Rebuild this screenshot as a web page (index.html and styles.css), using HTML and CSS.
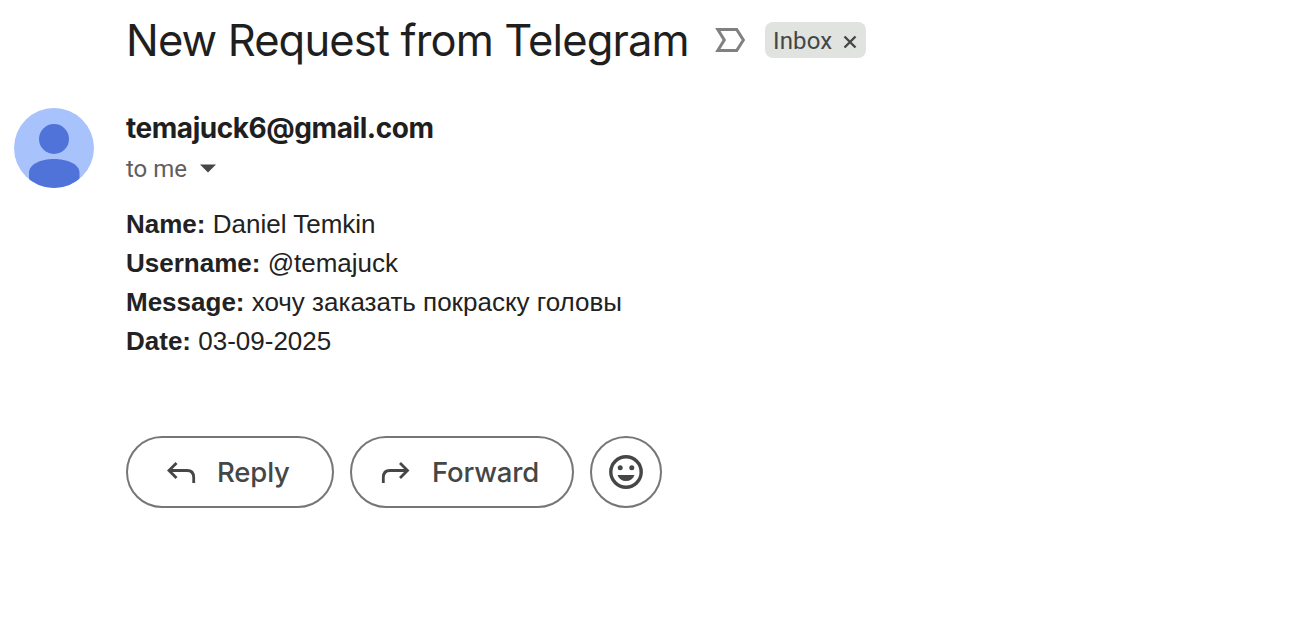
FILE: index.html
```html
<!DOCTYPE html>
<html lang="en">
<head>
<meta charset="utf-8">
<title>New Request from Telegram</title>
<link rel="stylesheet" href="styles.css">
</head>
<body>
<main class="mail">
  <header class="subject">
    <h1 class="subject-title">New Request from Telegram</h1>
    <svg class="importance" width="30" height="24" viewBox="0 0 30 24"><path d="M2.8 1.5H21.7L28.4 12L21.7 22.5H2.8L9.3 12Z" fill="none" stroke="#808080" stroke-width="3"/></svg>
    <span class="label"><span>Inbox</span><svg class="label-close" width="14" height="14" viewBox="0 0 14 14"><path d="M1.500 1.500L12.500 12.500M12.500 1.500L1.500 12.500" stroke="#444746" stroke-width="2.400"/></svg></span>
  </header>
  <section class="message">
    <svg class="avatar" width="80" height="80" viewBox="0 0 80 80">
      <defs><clipPath id="round"><circle cx="40" cy="40" r="40"/></clipPath></defs>
      <g clip-path="url(#round)">
        <rect width="80" height="80" fill="#a8c2fb"/>
        <circle cx="40" cy="31" r="15" fill="#4f73d9"/>
        <path d="M15 80V65C15 56 27 51 40 51S65.500 56 65.500 65V80Z" fill="#4f73d9"/>
      </g>
    </svg>
    <div class="content">
      <div class="sender">temajuck6@gmail.com</div>
      <div class="recipient"><span>to me</span><svg width="16" height="9" viewBox="0 0 16 9"><path d="M0 .5H16L8 8.500Z" fill="#444746"/></svg></div>
      <div class="body">
        <p><b>Name:</b> Daniel Temkin</p>
        <p><b>Username:</b> @temajuck</p>
        <p><b>Message:</b> хочу заказать покраску головы</p>
        <p><b>Date:</b> 03-09-2025</p>
      </div>
      <div class="actions">
        <button class="btn reply"><svg width="30" height="24" viewBox="0 0 30 24"><path d="M10.500 3L3 10.500L10.500 18M3.500 10.500H21Q27.700 10.500 27.700 17.500V23" fill="none" stroke="#444746" stroke-width="2.800"/></svg><span>Reply</span></button>
        <button class="btn forward"><svg width="30" height="24" viewBox="0 0 30 24"><path d="M20 3L27.500 10.500L20 18M27 10.500H10Q3.300 10.500 3.300 17.500V23" fill="none" stroke="#444746" stroke-width="2.800"/></svg><span>Forward</span></button>
        <button class="btn emoji" aria-label="React"><svg width="34" height="34" viewBox="0 0 34 34"><circle cx="17" cy="17" r="15.200" fill="none" stroke="#444746" stroke-width="3.400"/><circle cx="11.200" cy="12.800" r="2.500" fill="#444746"/><circle cx="22.800" cy="12.800" r="2.500" fill="#444746"/><path d="M8.500 20H25.500C24 24 21 26 17 26S10 24 8.500 20Z" fill="#444746"/></svg></button>
      </div>
    </div>
  </section>
</main>
</body>
</html>
```
FILE: styles.css
```css
* { box-sizing: border-box; }
body { margin: 0; background: #fff; color: #1f1f1f; font-family: Inter, Roboto, sans-serif; }
.mail { padding: 14px; }
.subject { display: flex; align-items: center; height: 52px; padding-left: 112px; }
.subject-title { margin: 0; width: 588px; font-size: 43.500px; line-height: 50px; padding-bottom: 1px; font-weight: 400; letter-spacing: -0.88px; white-space: nowrap; }
.importance { flex: none; margin-left: 1px; margin-right: 20px; }
.label { display: flex; align-items: center; justify-content: space-between; width: 101px; height: 36px; padding: 2px 9px 0 8px; border-radius: 8px; background: #e1e3e1; color: #444746; font-family: Roboto, sans-serif; font-size: 24px; line-height: 34px; letter-spacing: 0.15px; }
.label-close { margin-top: 1px; }
.message { display: flex; gap: 32px; margin-top: 42px; }
.avatar { flex: none; }
.sender { height: 40px; font-size: 28px; line-height: 41px; font-weight: 650; letter-spacing: -0.45px; }
.recipient { display: flex; align-items: center; gap: 13px; height: 40px; color: #5e5e5e; font-family: Roboto, sans-serif; font-size: 24px; line-height: 38px; }
.recipient span { padding-top: 2px; }
.body { margin-top: 17px; color: #222; font: 26px/39px "Liberation Sans", sans-serif; }
.body p { margin: 0; }
.actions { display: flex; gap: 16px; margin-top: 75px; }
.btn { display: flex; align-items: center; height: 72px; padding: 0; border: 2px solid #747775; border-radius: 36px; background: #fff; color: #444746; font: 500 27.500px/40px Inter, Roboto, sans-serif; letter-spacing: -0.15px; }
.reply { width: 208px; padding-left: 38px; gap: 21px; }
.forward { width: 224px; padding-left: 28px; gap: 22px; }
.emoji { width: 72px; justify-content: center; }
```
